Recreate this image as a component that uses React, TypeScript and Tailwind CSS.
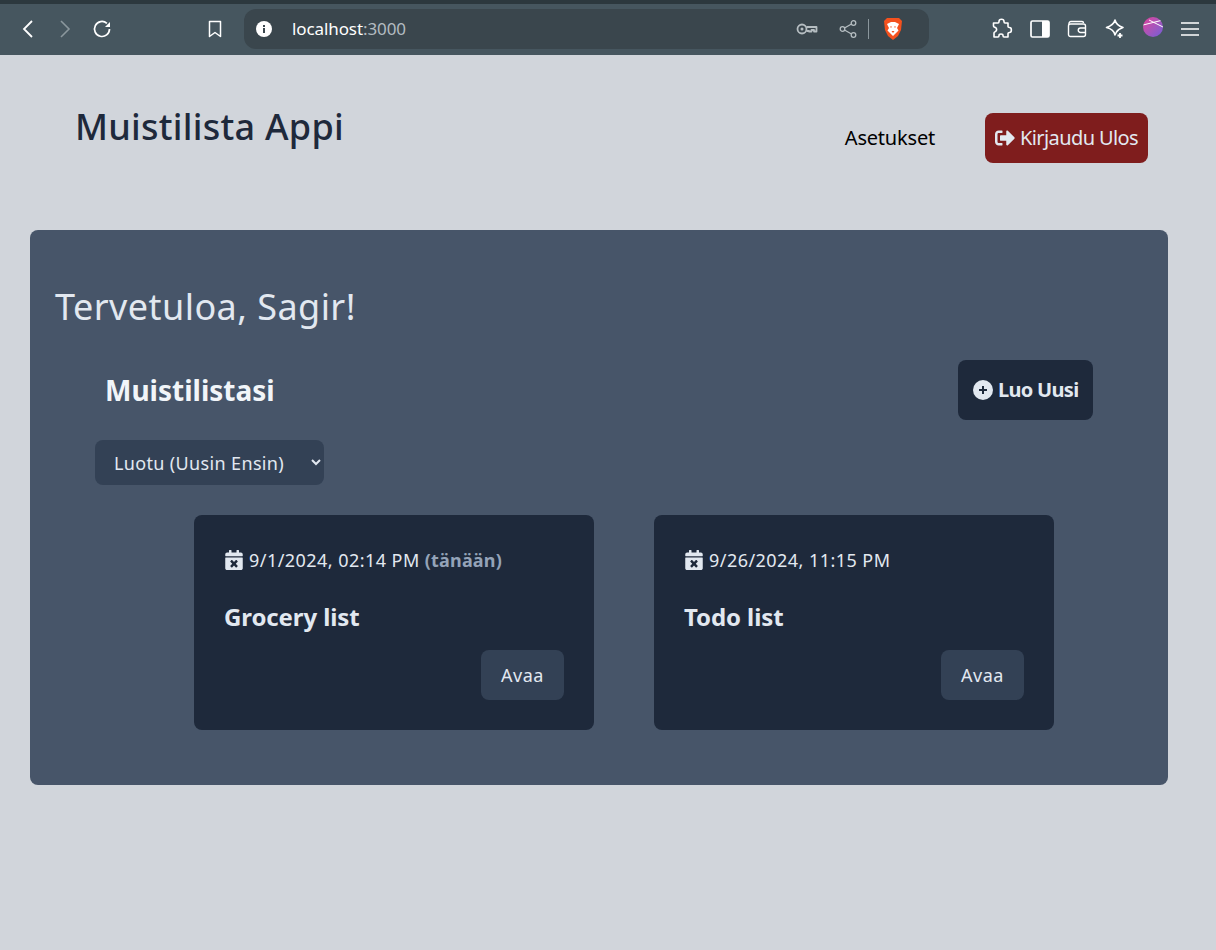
import { FaCalendarTimes, FaSignOutAlt } from 'react-icons/fa';

const notes = [
  { date: '9/1/2024, 02:14 PM', today: true, title: 'Grocery list' },
  { date: '9/26/2024, 11:15 PM', today: false, title: 'Todo list' },
];

function BrowserBar() {
  return (
    <div className="h-[55px] shrink-0 border-t-4 border-[#2c383e] bg-[#46565f] flex items-center pb-px text-white">
      <div className="w-[244px] shrink-0 flex items-center">
        <svg className="ml-[20px]" width="16" height="20" viewBox="0 0 16 20" fill="none" stroke="#fff" strokeWidth="1.8"><path d="M12 2 4 10l8 8" /></svg>
        <svg className="ml-[21px]" width="16" height="20" viewBox="0 0 16 20" fill="none" stroke="#8b979d" strokeWidth="1.6"><path d="M4 2l8 8-8 8" /></svg>
        <svg className="ml-[19px]" width="20" height="20" viewBox="0 0 20 20" fill="none" stroke="#fff" strokeWidth="1.7"><path d="M17.5 10a7.5 7.5 0 1 1-2.6-5.7" /><path d="M18 3v5h-5z" fill="#fff" stroke="none" /></svg>
        <svg className="ml-[95px]" width="16" height="20" viewBox="0 0 16 20" fill="none" stroke="#fff" strokeWidth="1.5"><path d="M2.5 2.5h11v15L8 13.5l-5.500 4z" strokeLinejoin="round" /></svg>
      </div>
      <div className="w-[685px] h-10 rounded-xl bg-[#3a464d] flex items-center pl-[12px]">
        <svg width="16" height="16" viewBox="0 0 16 16"><circle cx="8" cy="8" r="8" fill="#fff" /><rect x="7" y="7" width="2" height="5" fill="#3a464d" /><rect x="7" y="4" width="2" height="2" fill="#3a464d" /></svg>
        <span className="ml-[20px] text-[17px] tracking-[-0.1px] text-white">localhost<span className="text-[#b3bcc1]">:3000</span></span>
        <div className="ml-auto flex items-center pr-[26px]">
          <svg width="22" height="14" viewBox="0 0 22 14" fill="none" stroke="#b5bdc1" strokeWidth="1.8"><circle cx="6" cy="7" r="4.500" /><circle cx="6" cy="7" r="1.500" fill="#b5bdc1" stroke="none" /><path d="M10.500 5H20.500V9.500H18V8H15.500V9.500H13V9H10.500" strokeLinejoin="round" /></svg>
          <svg className="ml-[21px]" width="18" height="18" viewBox="0 0 18 18" fill="none" stroke="#b5bdc1" strokeWidth="1.3"><circle cx="3.500" cy="9" r="2.300" /><circle cx="14.500" cy="3" r="2.300" /><circle cx="14.500" cy="15" r="2.300" /><path d="M5.500 8 12.500 4M5.500 10l7 4" /></svg>
          <div className="ml-[11px] w-px h-5 bg-[#8b979d]" />
          <svg className="ml-[14px]" width="20" height="24" viewBox="0 0 20 24"><path d="M4 1h12l3 3-1 9-3 6-5 4-5-4-3-6-1-9z" fill="#f4511e" /><path d="M4 7l4-2h4l4 2-2 4 1.500 2.500L10 19l-5.500-5.500L6 11z" fill="#fff" /><path d="M7 9.500h2L8 11zM11 9.500h2L12 11zM8.500 14h3L10 16z" fill="#f4511e" /></svg>
        </div>
      </div>
      <div className="flex-1 flex items-center pl-[62px]">
        <svg width="22" height="22" viewBox="0 0 22 22" fill="none" stroke="#fff" strokeWidth="1.6" strokeLinejoin="round"><path d="M8 3.500c0-3 5-3 5 0 0 1 0 1.500 1 1.500h3v3.500c0 1 .5 1 1.500 1 2.500 0 2.500 5 0 5-1 0-1.500 0-1.500 1V19h-4c-1 0-1-.5-1-1.500 0-2-4-2-4 0 0 1 0 1.500-1 1.500H3v-4c0-1 1-1 1.500-1.500 1.500-1 1.500-3 0-4C3.500 9 2.500 9 2.500 8V5H7c1 0 1-.5 1-1.500z" /></svg>
        <svg className="ml-[17px]" width="20" height="18" viewBox="0 0 20 18" fill="none"><rect x="1" y="1" width="18" height="16" rx="1.500" stroke="#fff" strokeWidth="1.700" /><rect x="12" y="1" width="7" height="16" fill="#fff" /></svg>
        <svg className="ml-[17px]" width="20" height="18" viewBox="0 0 20 18" fill="none" stroke="#fff" strokeWidth="1.400"><path d="M2 4.500V3.500C2 2 3 1.500 4 1.500h11c1 0 1.500 .5 1.500 1.500" /><rect x="1.500" y="4" width="17" height="12.500" rx="2" /><path d="M18.500 8h-5a2 2 0 0 0 0 4.500h5" /></svg>
        <svg className="ml-[18px]" width="20" height="22" viewBox="0 0 20 22" fill="none" stroke="#fff" strokeWidth="1.600" strokeLinejoin="round"><path d="M10 2c1 4 3 6 8 7.500-3 1-5 2-6.500 4.500L10 17c-1-5-4-6.500-8.500-7.500C6 8 9 6 10 2z" /><path d="M15 15v5M12.500 17.500h5" strokeWidth="1.800" /></svg>
        <div className="ml-[18px] mb-[4px] w-5 h-5 rounded-full overflow-hidden bg-gradient-to-br from-[#e0399a] to-[#6f5bd8] relative">
          <svg className="absolute inset-0" width="20" height="20" viewBox="0 0 20 20" fill="none" stroke="#fff" strokeWidth="1"><path d="M0 8 20 3M6 3l14 7" /></svg>
        </div>
        <svg className="ml-[17px]" width="20" height="16" viewBox="0 0 20 16" stroke="#fff" strokeWidth="1.500"><path d="M1 2h18M1 8h18M1 14h18" /></svg>
      </div>
    </div>
  );
}

function NoteCard({ date, today, title }: { date: string; today: boolean; title: string }) {
  return (
    <div className="w-[400px] h-[215px] rounded-lg bg-[#1e293b] p-[30px]">
      <div className="h-[30px] flex items-center text-[18px] text-[#e2e8f0]">
        <FaCalendarTimes className="text-[#e2e8f0] w-[18px] h-5 ml-px mr-[6px]" />
        <span className="tracking-[0.45px]">{date}</span>
        {today && <span className="ml-[5px] font-bold text-[#94a3b8] tracking-[0.2px]">(tänään)</span>}
      </div>
      <h3 className="mt-[26px] text-[24px] leading-8 font-bold text-[#e2e8f0] tracking-[-0.1px]">{title}</h3>
      <div className="mt-[17px] flex justify-end">
        <button className="w-[83px] h-[50px] rounded-lg bg-[#334155] text-[18px] text-[#e2e8f0] tracking-[0.5px]">Avaa</button>
      </div>
    </div>
  );
}

export default function App() {
  return (
    <div className="w-[1216px] h-[950px] overflow-hidden flex flex-col bg-[#d1d5db] font-['Noto_Sans',sans-serif]">
      <BrowserBar />
      <header className="h-[175px] shrink-0 pl-[75px] pr-[68px] flex justify-between">
        <h1 className="mt-[46px] text-[36px] leading-[52px] font-medium text-[#1e293b] tracking-[0.25px]">Muistilista Appi</h1>
        <nav className="mt-[58px] flex items-start">
          <span className="mt-[10px] mr-[50px] text-[20px] leading-[30px] text-black tracking-[-0.2px]">Asetukset</span>
          <button className="w-[163px] h-[50px] rounded-lg bg-[#7f1d1d] text-[#e2e8f0] text-[20px] flex items-center pl-[10px] tracking-[-0.6px]">
            <FaSignOutAlt className="w-5 h-5 mr-[5px]" />
            Kirjaudu Ulos
          </button>
        </nav>
      </header>
      <main className="mx-[30px] w-[1138px] h-[555px] rounded-lg bg-[#475569] text-[#e2e8f0]">
        <h2 className="ml-[25px] mt-[51px] text-[36px] leading-[52px] text-[#e2e8f0] tracking-[0.45px]">Tervetuloa, Sagir!</h2>
        <div className="mt-[27px] pl-[75px] pr-[75px] flex items-center justify-between">
          <h2 className="text-[28px] font-bold text-[#f1f5f9]">Muistilistasi</h2>
          <button className="w-[135px] h-[60px] rounded-lg bg-[#1e293b] text-[20px] font-bold text-[#e2e8f0] flex items-center pl-[15px] tracking-[-0.7px]">
            <svg className="mr-[5px]" width="20" height="20" viewBox="0 0 20 20"><circle cx="10" cy="10" r="10" fill="#e2e8f0" /><path d="M10 6v8M6 10h8" stroke="#1e293b" strokeWidth="2" /></svg>
            Luo Uusi
          </button>
        </div>
        <select className="mt-[20px] ml-[65px] block w-[229px] h-[45px] rounded-lg bg-[#334155] pl-[15px] text-[18px] text-[#e2e8f0] tracking-[0.35px]">
          <option>Luotu (Uusin Ensin)</option>
        </select>
        <div className="mt-[30px] flex gap-[60px] pl-[164px]">
          {notes.map((n) => (
            <NoteCard key={n.title} {...n} />
          ))}
        </div>
      </main>
    </div>
  );
}
